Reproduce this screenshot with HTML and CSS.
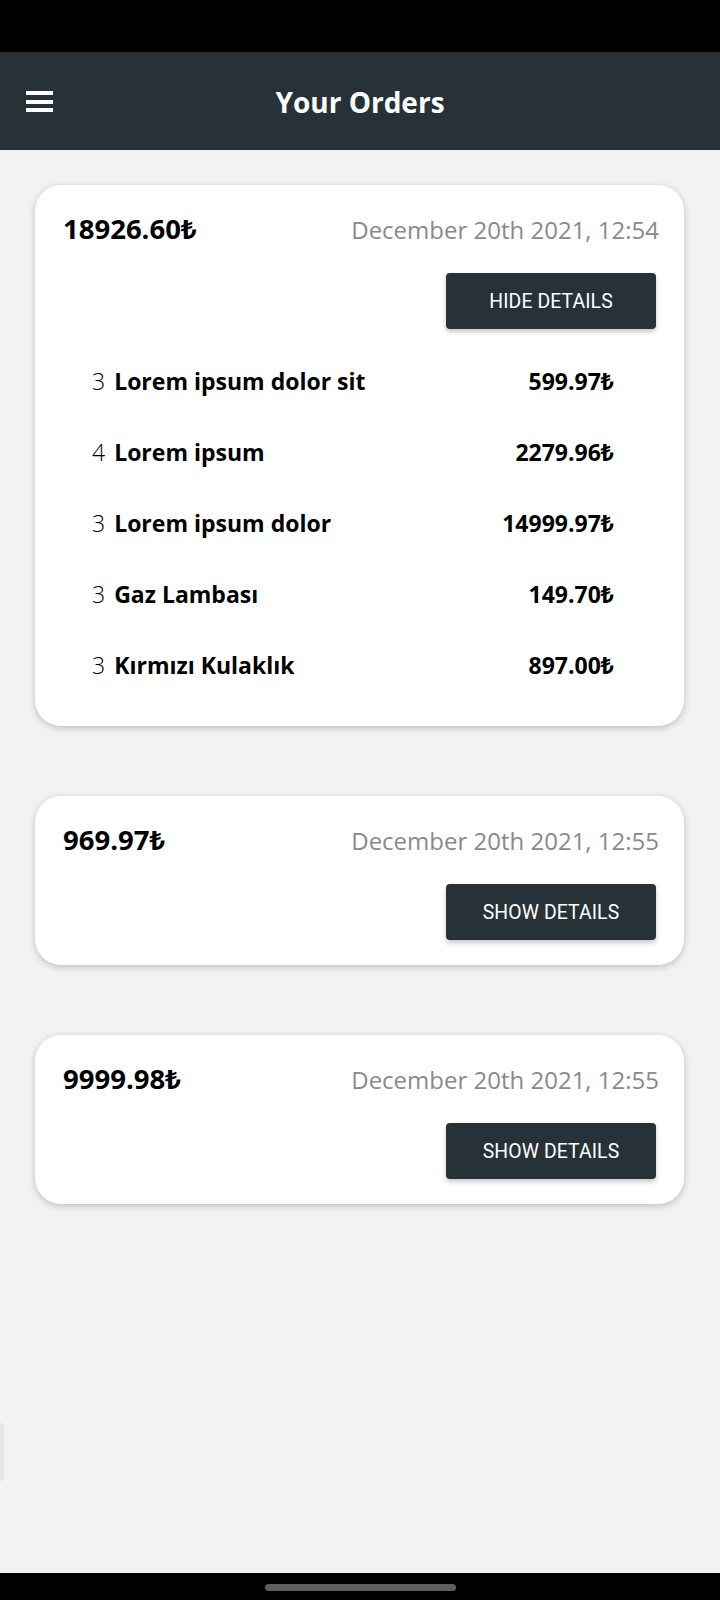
FILE: index.html
```html
<!DOCTYPE html>
<html lang="en">
<head>
<meta charset="utf-8">
<title>Your Orders</title>
<link rel="stylesheet" href="styles.css">
</head>
<body>
<div class="statusbar"></div>
<header class="appbar">
  <button class="menu" aria-label="Menu">
    <span class="bar"></span><span class="bar"></span><span class="bar"></span>
  </button>
  <h1 class="title">Your Orders</h1>
</header>
<main class="orders">
  <section class="card">
    <div class="card-head">
      <span class="total">18926.60₺</span>
      <span class="date">December 20th 2021, 12:54</span>
    </div>
    <div class="actions"><button class="details-btn">HIDE DETAILS</button></div>
    <ul class="items">
      <li class="item"><span class="qty">3</span><span class="name">Lorem ipsum dolor sit</span><span class="price">599.97₺</span></li>
      <li class="item"><span class="qty">4</span><span class="name">Lorem ipsum</span><span class="price">2279.96₺</span></li>
      <li class="item"><span class="qty">3</span><span class="name">Lorem ipsum dolor</span><span class="price">14999.97₺</span></li>
      <li class="item"><span class="qty">3</span><span class="name">Gaz Lambası</span><span class="price">149.70₺</span></li>
      <li class="item"><span class="qty">3</span><span class="name">Kırmızı Kulaklık</span><span class="price">897.00₺</span></li>
    </ul>
  </section>
  <section class="card">
    <div class="card-head">
      <span class="total">969.97₺</span>
      <span class="date">December 20th 2021, 12:55</span>
    </div>
    <div class="actions"><button class="details-btn">SHOW DETAILS</button></div>
  </section>
  <section class="card">
    <div class="card-head">
      <span class="total">9999.98₺</span>
      <span class="date">December 20th 2021, 12:55</span>
    </div>
    <div class="actions"><button class="details-btn">SHOW DETAILS</button></div>
  </section>
</main>
<div class="edge-handle"></div>
<nav class="navbar"><span class="pill"></span></nav>
</body>
</html>
```
FILE: styles.css
```css
* { box-sizing: border-box; }
html, body { margin: 0; padding: 0; }
body {
  width: 720px;
  height: 1600px;
  background: #f2f2f2;
  font-family: "Open Sans", "Noto Sans", "Liberation Sans", sans-serif;
  display: flex;
  flex-direction: column;
  position: relative;
  overflow: hidden;
}
.statusbar { height: 52px; background: #000; flex: none; }
.appbar {
  height: 98px;
  background: #263238;
  flex: none;
  display: flex;
  align-items: center;
  justify-content: center;
  position: relative;
}
.menu {
  position: absolute;
  left: 26px;
  top: 39px;
  width: 27px;
  height: 21px;
  padding: 0;
  border: 0;
  background: none;
  display: flex;
  flex-direction: column;
  justify-content: space-between;
}
.menu .bar { display: block; height: 4px; background: #fff; }
.title {
  margin: 0;
  color: #fff;
  font-size: 28px;
  font-weight: 700;
  line-height: 36px;
  position: relative;
  top: 1px;
}
.orders {
  flex: 1;
  padding: 35px 36px 0 35px;
  display: flex;
  flex-direction: column;
  gap: 70px;
}
.card {
  background: #fff;
  border-radius: 26px;
  padding: 26px 28px 25px 28px;
  box-shadow: 0 2px 7px rgba(0,0,0,0.22);
}
.card-head {
  display: flex;
  justify-content: space-between;
  align-items: baseline;
  line-height: 36px;
  height: 36px;
}
.total { font-size: 27.5px; font-weight: 700; color: #000; }
.date { font-size: 24px; font-weight: 400; color: #8a8a8a; margin-right: -3px; }
.actions { display: flex; justify-content: flex-end; margin-top: 26px; }
.details-btn {
  width: 210px;
  height: 56px;
  border: 0;
  border-radius: 4px;
  background: #263238;
  color: #fff;
  font-family: Roboto, "Liberation Sans", sans-serif;
  font-size: 19.4px;
  font-weight: 400;
  letter-spacing: 0.1px;
  box-shadow: 0 3px 5px rgba(0,0,0,0.22);
  padding: 0;
}
.items { list-style: none; margin: 17px 0 0; padding: 0 42px 0 29px; }
.item {
  display: flex;
  align-items: baseline;
  height: 71px;
  line-height: 71px;
  font-size: 23px;
  color: #000;
}
.qty { font-weight: 300; margin-right: 9px; }
.name { font-weight: 700; flex: 1; }
.price { font-weight: 700; font-size: 23px; }
.edge-handle {
  position: absolute;
  left: 0;
  top: 1423px;
  width: 4px;
  height: 58px;
  background: #e6e6e6;
  border-radius: 0 3px 3px 0;
}
.navbar {
  height: 27px;
  background: #000;
  flex: none;
  display: flex;
  justify-content: center;
  padding-top: 11px;
}
.pill { width: 191px; height: 7px; border-radius: 4px; background: #5f5f5f; }
```
